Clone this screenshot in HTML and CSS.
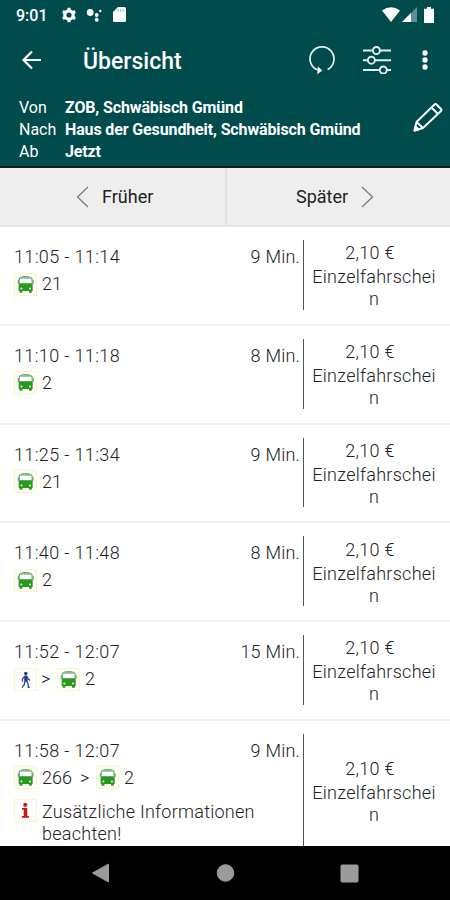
FILE: index.html
```html
<!DOCTYPE html>
<html lang="de">
<head>
    <meta charset="UTF-8">
    <meta name="viewport" content="width=device-width, initial-scale=1.0">
    <title>Übersicht</title>
    <link rel="stylesheet" href="styles.css">
</head>
<body>
    <svg class="sprite" width="0" height="0">
        <symbol id="bus" viewBox="0 0 24 24">
            <path d="M4.800 11V6.500Q4.800 3 12.200 3t7.400 3.500V11z" fill="#fff" stroke="#5fa862" stroke-width="1.300"/>
            <path d="M6.500 5.500Q7.500 2.800 12.200 2.800t5.700 2.700z" fill="#8cba8e"/>
            <path d="M3.700 7v4M20.700 7v4" stroke="#4a9e4c" stroke-width="1.200"/>
            <path d="M4.200 11.500h16v8h-1v2h-3.200v-2H8.400v2H5.200v-2h-1z" fill="#289a1c"/>
            <circle cx="7.300" cy="16.500" r="1.200" fill="#e4f3dc"/>
            <circle cx="17.100" cy="16.500" r="1.200" fill="#e4f3dc"/>
        </symbol>
        <symbol id="walk" viewBox="0 0 24 24">
            <circle cx="12.300" cy="5" r="2" fill="#1d3a9a"/>
            <path d="M10.500 7.500h3.500l.6 7h-4z" fill="#1d3a9a"/>
            <path d="M11 8.500l-2.500 3v3M13.800 8.500l1.200 3 2.200 1.500M11.500 14l-1 4-2.500 3.300M13.500 14l1.500 3 .3 4h1.700" fill="none" stroke="#2b4698" stroke-width="1.500"/>
        </symbol>
        <symbol id="info" viewBox="0 0 24 24">
            <circle cx="11.800" cy="5.500" r="2.400" fill="#d0141c"/>
            <path d="M8 9h6v9.300h2v2H7.800v-2H10V11H8z" fill="#d0141c"/>
        </symbol>
    </svg>

    <header class="header">
        <div class="status">
            <span class="clock">9:01</span>
            <svg class="gear" width="16" height="16" viewBox="0 0 16 16">
                <circle cx="8" cy="8" r="4.200" fill="none" stroke="#fff" stroke-width="3.200"/>
                <path d="M8 .8v3M8 12.200v3M1.800 4.400l2.600 1.500M11.600 10.100l2.600 1.500M1.800 11.600l2.600-1.500M11.600 5.900l2.600-1.500" stroke="#fff" stroke-width="3"/>
            </svg>
            <svg class="dots" width="17" height="16" viewBox="0 0 17 16">
                <circle cx="4.200" cy="5.500" r="3.400" fill="#fff"/>
                <circle cx="10.700" cy="8" r="1.900" fill="#fff"/>
                <circle cx="10.700" cy="12.700" r="2" fill="#fff"/>
                <circle cx="14.300" cy="4" r="1.200" fill="#fff"/>
            </svg>
            <svg class="card-icon" width="13" height="15" viewBox="0 0 13 15">
                <path d="M5 0h6.500Q13 0 13 1.500v12q0 1.500-1.500 1.500h-10Q0 15 0 13.500V5z" fill="#fff"/>
                <path d="M5.200 2v3M7.700 2v3M10.200 2v3" stroke="#9bb9b9"/>
            </svg>
            <span class="spacer"></span>
            <svg width="18" height="15" viewBox="0 0 18 15">
                <path d="M0 3.500Q9-3 18 3.500L9 15z" fill="#fff"/>
            </svg>
            <svg class="signal" width="15" height="15" viewBox="0 0 15 15">
                <path d="M15 0v15H0z" fill="#5f8f90"/>
                <path d="M9 6v9H0z" fill="#fff"/>
            </svg>
            <svg class="battery" width="10" height="16" viewBox="0 0 10 16">
                <path d="M3 0h4v1.700h3V16H0V1.700h3z" fill="#fff"/>
            </svg>
        </div>

        <div class="toolbar">
            <svg class="back" width="20" height="20" viewBox="0 0 20 20" fill="none" stroke="#fff" stroke-width="2.200">
                <path d="M20 10H2.500M11 1.500L2.500 10l8.500 8.500"/>
            </svg>
            <h1>Übersicht</h1>
            <svg class="refresh" width="28" height="30" viewBox="0 0 28 30" fill="none" stroke="#e4eeee" stroke-width="1.700">
                <path d="M19.600 24.500A12 12 0 1 0 8 24.300l3.500 1"/>
                <path d="M9.800 21.500l4.500 4-5 3.800z" fill="#fff" stroke="none"/>
            </svg>
            <svg class="sliders" width="28" height="28" viewBox="0 0 28 28" fill="none" stroke="#e4eeee" stroke-width="1.900">
                <path d="M0 4.500h9.800M17 4.500h11M0 14.200h4.700M12 14.200h16M0 24h16.500M24 24h4"/>
                <circle cx="13.400" cy="4.500" r="3.500"/>
                <circle cx="8.400" cy="14.200" r="3.500"/>
                <circle cx="20.300" cy="24" r="3.500"/>
            </svg>
            <svg class="more" width="6" height="20" viewBox="0 0 6 20" fill="#fff">
                <circle cx="3" cy="3" r="2.700"/>
                <circle cx="3" cy="10" r="2.700"/>
                <circle cx="3" cy="17" r="2.700"/>
            </svg>
        </div>

        <div class="trip">
            <dl>
                <dt>Von</dt><dd>ZOB, Schwäbisch Gmünd</dd>
                <dt>Nach</dt><dd>Haus der Gesundheit, Schwäbisch Gmünd</dd>
                <dt>Ab</dt><dd>Jetzt</dd>
            </dl>
            <svg class="edit" width="30" height="30" viewBox="0 0 30 30" fill="none" stroke="#fff" stroke-width="1.900" stroke-linejoin="round">
                <path d="M1.500 28.500l2-8.500L21.500 2.500q1-1 2 0l4.500 4.500q1 1 0 2L10 26z"/>
                <path d="M3.500 20l6.500 6M18.500 5.500l6.500 6.500"/>
                <path d="M1.500 28.500l1-4 3 3z" fill="#fff"/>
            </svg>
        </div>
    </header>

    <nav class="pager">
        <div class="pager-btn earlier">
            <svg width="13" height="22" viewBox="0 0 13 22" fill="none" stroke="#777" stroke-width="1.200"><path d="M12 1L1.500 11 12 21"/></svg>
            <span>Früher</span>
        </div>
        <div class="pager-btn later">
            <span>Später</span>
            <svg width="13" height="22" viewBox="0 0 13 22" fill="none" stroke="#777" stroke-width="1.200"><path d="M1 1l10.500 10L1 21"/></svg>
        </div>
    </nav>

    <main class="list">
        <div class="row">
            <div class="connection">
                <div class="times"><span class="time">11:05 - 11:14</span><span class="duration">9 Min.</span></div>
                <div class="lines"><svg class="icon"><use href="#bus"/></svg><span>21</span></div>
            </div>
            <div class="price"><span class="amount">2,10 €</span><span class="ticket">Einzelfahrschein</span></div>
        </div>
        <div class="row">
            <div class="connection">
                <div class="times"><span class="time">11:10 - 11:18</span><span class="duration">8 Min.</span></div>
                <div class="lines"><svg class="icon"><use href="#bus"/></svg><span>2</span></div>
            </div>
            <div class="price"><span class="amount">2,10 €</span><span class="ticket">Einzelfahrschein</span></div>
        </div>
        <div class="row">
            <div class="connection">
                <div class="times"><span class="time">11:25 - 11:34</span><span class="duration">9 Min.</span></div>
                <div class="lines"><svg class="icon"><use href="#bus"/></svg><span>21</span></div>
            </div>
            <div class="price"><span class="amount">2,10 €</span><span class="ticket">Einzelfahrschein</span></div>
        </div>
        <div class="row">
            <div class="connection">
                <div class="times"><span class="time">11:40 - 11:48</span><span class="duration">8 Min.</span></div>
                <div class="lines"><svg class="icon"><use href="#bus"/></svg><span>2</span></div>
            </div>
            <div class="price"><span class="amount">2,10 €</span><span class="ticket">Einzelfahrschein</span></div>
        </div>
        <div class="row">
            <div class="connection">
                <div class="times"><span class="time">11:52 - 12:07</span><span class="duration">15 Min.</span></div>
                <div class="lines"><svg class="icon"><use href="#walk"/></svg><span class="next">&gt;</span><svg class="icon"><use href="#bus"/></svg><span>2</span></div>
            </div>
            <div class="price"><span class="amount">2,10 €</span><span class="ticket">Einzelfahrschein</span></div>
        </div>
        <div class="row row-tall">
            <div class="connection">
                <div class="times"><span class="time">11:58 - 12:07</span><span class="duration">9 Min.</span></div>
                <div class="lines"><svg class="icon"><use href="#bus"/></svg><span>266</span><span class="next wide">&gt;</span><svg class="icon"><use href="#bus"/></svg><span>2</span></div>
                <div class="notice"><svg class="icon"><use href="#info"/></svg><span>Zusätzliche Informationen beachten!</span></div>
            </div>
            <div class="price"><span class="amount">2,10 €</span><span class="ticket">Einzelfahrschein</span></div>
        </div>
    </main>

    <footer class="navbar">
        <svg width="450" height="54" viewBox="0 0 450 54" fill="#9b9b9b" stroke="#9b9b9b" stroke-linejoin="round">
            <path d="M92.500 27L108.500 18v18z"/>
            <circle cx="225.500" cy="27" r="8.300"/>
            <rect x="341" y="19" width="17" height="17" rx="1"/>
        </svg>
    </footer>
</body>
</html>
```

FILE: styles.css
```css
* {
    box-sizing: border-box;
}
body {
    margin: 0;
    height: 900px;
    overflow: hidden;
    display: flex;
    flex-direction: column;
    font-family: Roboto, sans-serif;
    background-color: #fff;
    color: #222;
}
svg {
    display: block;
    flex-shrink: 0;
}
.sprite {
    display: none;
}
.header {
    flex-shrink: 0;
    height: 168px;
    background-color: #004b4c;
    border-bottom: 2px solid #061c1d;
    color: #fff;
}
.status {
    display: flex;
    align-items: center;
    height: 29px;
    padding: 0 16px 0 16px;
}
.clock {
    width: 45px;
    padding-top: 1px;
    font-size: 16px;
    font-weight: 500;
}
.dots {
    margin-left: 9px;
}
.card-icon {
    margin-left: 10px;
}
.spacer {
    flex: 1;
}
.signal {
    margin-left: 2px;
}
.battery {
    margin-left: 7px;
}
.toolbar {
    display: flex;
    align-items: center;
    height: 62px;
    padding: 0 22px 0 21px;
}
.toolbar h1 {
    flex: 1;
    margin: 3px 0 0 42px;
    font-size: 23px;
    font-weight: 500;
}
.sliders {
    margin-left: 27px;
}
.more {
    margin-left: 31px;
}
.trip {
    display: flex;
    justify-content: space-between;
    padding: 6px 7px 0 19px;
}
.trip dl {
    display: grid;
    grid-template-columns: 46px auto;
    margin: 0;
    font-size: 16px;
    line-height: 22px;
}
.trip dd {
    margin: 0;
    font-weight: 700;
    letter-spacing: -0.13px;
}
.edit {
    margin-top: 5px;
}
.pager {
    display: flex;
    flex-shrink: 0;
    height: 59px;
    background-color: #eee;
    border-bottom: 2px solid #e6e6e6;
    font-size: 18px;
}
.pager-btn {
    display: flex;
    align-items: center;
    gap: 13px;
}
.earlier {
    width: 227px;
    padding-left: 76px;
    border-right: 2px solid #e0e0e0;
}
.later {
    flex: 1;
    padding-left: 69px;
}
.list {
    flex: 1;
    min-height: 0;
    overflow: hidden;
    font-size: 18px;
    font-weight: 300;
    line-height: 22px;
}
.row {
    display: flex;
    height: 98.75px;
    padding: 13px 0 14px 14px;
    border-bottom: 2px solid #f0f0f0;
}
.row-tall {
    height: 143px;
}
.connection {
    width: 290px;
    padding: 6px 3px 0 0;
    border-right: 1px solid #555;
}
.times {
    display: flex;
    justify-content: space-between;
}
.time {
    letter-spacing: 0.36px;
}
.duration {
    letter-spacing: 0.2px;
}
.lines {
    display: flex;
    align-items: center;
    gap: 5px;
    height: 24px;
    margin-top: 4px;
}
.icon {
    width: 23px;
    height: 23px;
    border: 1px solid #fbf6bd;
}
.next {
    width: 9px;
    margin: 0 2px 0 -1px;
}
.wide {
    margin: 0 2px 0 3px;
}
.notice {
    display: flex;
    gap: 5px;
    margin-top: 9px;
    letter-spacing: 0.26px;
}
.notice span {
    padding-top: 2px;
}
.price {
    display: flex;
    flex: 1;
    flex-direction: column;
    justify-content: center;
    gap: 2px;
    padding: 3px 13px 0 7px;
    text-align: center;
    letter-spacing: 0.27px;
}
.amount {
    padding-right: 8px;
}
.ticket {
    word-break: break-all;
}
.navbar {
    flex-shrink: 0;
    height: 54px;
    background-color: #000;
}
```
